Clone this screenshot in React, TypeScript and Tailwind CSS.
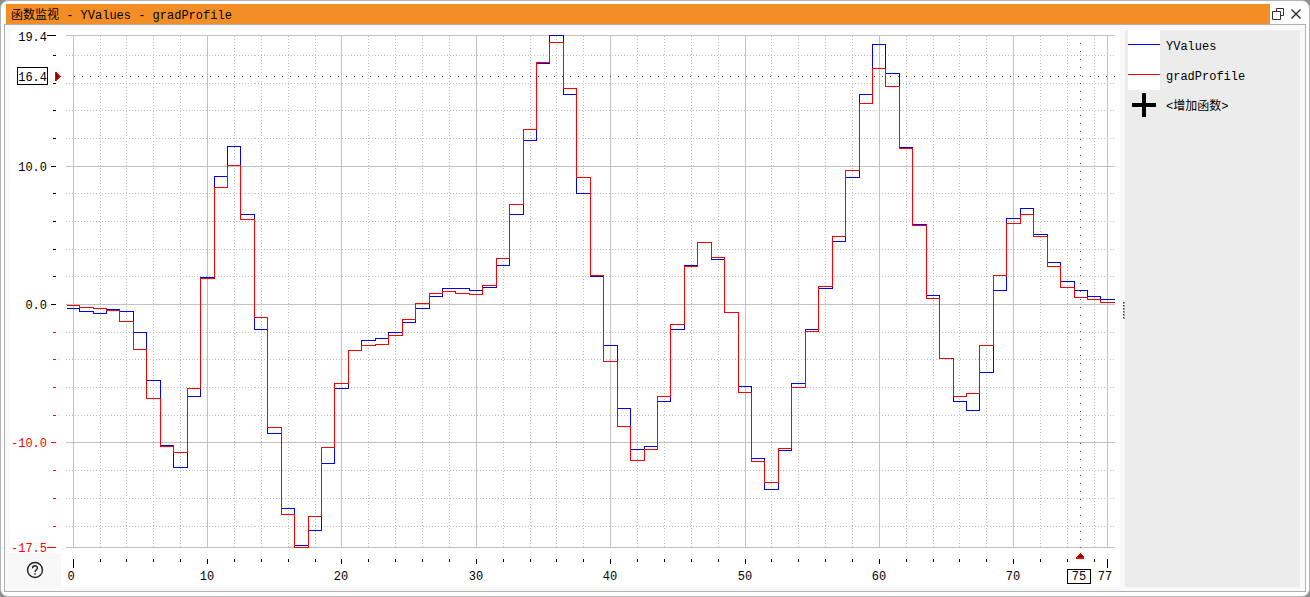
import { useState } from 'react';

type TSeries = {
   name: string;
   color: string;
   rows: number[];
};

// one canvas row per sample, index 0 - 77
const yValues = [
   308, 311, 313, 309, 311, 332, 380, 445, 467, 396, 277, 176, 146, 214, 329, 433, 508, 545, 530, 463, 388, 350, 340, 338, 332, 322, 308, 296, 288, 288,
   290, 287, 265, 214, 140, 63, 35, 94, 193, 276, 345, 408, 449, 446, 401, 329, 265, 242, 259, 312, 386, 458, 489, 450, 383, 329, 288, 241, 177, 94, 44, 73,
   147, 224, 295, 358, 401, 410, 372, 290, 218, 208, 234, 262, 281, 290, 296, 299,
];

const gradProfile = [
   305, 307, 308, 310, 321, 349, 398, 446, 452, 388, 278, 187, 165, 219, 317, 427, 514, 547, 516, 447, 383, 350, 345, 344, 335, 319, 303, 293, 291, 293,
   294, 285, 258, 204, 129, 62, 42, 88, 177, 275, 361, 426, 460, 449, 396, 324, 266, 242, 257, 312, 392, 461, 482, 448, 387, 331, 286, 236, 170, 103, 68, 86,
   148, 225, 298, 358, 396, 393, 345, 275, 223, 214, 236, 266, 287, 297, 299, 302,
];

const series: TSeries[] = [
   { name: 'YValues', color: '#0000ff', rows: yValues },
   { name: 'gradProfile', color: '#ff0000', rows: gradProfile },
];

const LEFT = 65;
const RIGHT = 1114;
const TOP = 35;
const BOTTOM = 547;

const gridX = (i: number) => Math.floor(73.15 + 13.437 * i);
const edgeX = (i: number) => Math.floor(72.95 + 13.437 * (i + 0.5));
const gridY = (value: number) => Math.floor(304.55 - 13.8425 * value);

const stepPath = (rows: number[]) => rows.map((y, i) => `${i === 0 ? `M66 ${y}` : `V${y}`}H${i === rows.length - 1 ? RIGHT : edgeX(i)}`).join('');

const xTicks = Array.from({ length: 39 }, (_, i) => i * 2);
const yTicks = Array.from({ length: 18 }, (_, i) => 18 - i * 2);

const yLabels = [
   { text: '19.4', base: 41 },
   { text: '10.0', base: 171 },
   { text: '0.0', base: 309 },
   { text: '-10.0', base: 447 },
   { text: '-17.5', base: 552 },
];

const Chart = () => (
   <svg viewBox="10 30 1110 557" preserveAspectRatio="xMinYMin meet" className="block h-full w-full bg-white font-['Liberation_Mono',monospace] text-xs">
      <rect x="10" y="553" width="51" height="34" fill="#f8f8f8" />

      <g transform="translate(.5 .5)" fill="none" stroke="#c0c0c0" shapeRendering="crispEdges">
         {xTicks.map((i) => (
            <path key={i} d={`M${gridX(i)} ${TOP}V${BOTTOM}`} strokeDasharray={i % 10 ? '1 2' : undefined} />
         ))}
         <path d={`M${gridX(77)} ${TOP}V${BOTTOM}`} />
         {yTicks.map((v) => (
            <path key={v} d={`M${LEFT} ${gridY(v)}H${RIGHT}`} strokeDasharray={v % 10 ? '1 2' : undefined} />
         ))}
         <path d={`M${LEFT} ${TOP}H${RIGHT}M${LEFT} ${BOTTOM}H${RIGHT}`} />

         {/* cursor */}
         <path d={`M73.5 76H${RIGHT}M1080 42.5V${BOTTOM}`} stroke="#555555" strokeDasharray="1 7" />

         {series.map((item) => (
            <path key={item.name} d={stepPath(item.rows)} stroke={item.color} />
         ))}
      </g>

      <g shapeRendering="crispEdges">
         {yTicks.map((v) => (
            <rect key={v} x={v % 10 ? 53 : 51} y={gridY(v)} width={v % 10 ? 3 : 5} height="1" fill={v < 0 ? '#ff0000' : '#000000'} />
         ))}
         <rect x="47" y={TOP} width="9" height="1" />
         <rect x="47" y={BOTTOM} width="9" height="1" fill="#ff0000" />
         {xTicks.slice(1).map((i) => (
            <rect key={i} x={gridX(i)} y="559" width="1" height={i % 10 ? 3 : 5} />
         ))}
         <rect x={gridX(0)} y="559" width="1" height="9" />
         <rect x={gridX(77)} y="559" width="1" height="9" />
      </g>

      {yLabels.map((item) => (
         <text key={item.text} x="47" y={item.base} textAnchor="end" fill={item.text.startsWith('-') ? '#ff0000' : '#000000'}>
            {item.text}
         </text>
      ))}
      <text x="71" y="580" textAnchor="middle">
         0
      </text>
      {[10, 20, 30, 40, 50, 60, 70].map((i) => (
         <text key={i} x={gridX(i)} y="580" textAnchor="middle">
            {i}
         </text>
      ))}
      <text x="1105" y="580" textAnchor="middle">
         77
      </text>

      <rect x="17.5" y="67.5" width="30" height="17" fill="#ffffff" stroke="#000000" />
      <text x="47" y="81" textAnchor="end">
         16.4
      </text>
      <g shapeRendering="crispEdges">
         <path d="M55 72H57V73H58V74H59V75H60V76H61V77H60V78H59V79H58V80H57V81H55Z" fill="#ee0000" />
         <path d="M56 74H57V75H58V76H59V77H58V78H57V79H56Z" fill="#800000" />
      </g>

      <rect x="1067.5" y="569.5" width="23" height="14" fill="#ffffff" stroke="#000000" />
      <text x="1079" y="580" textAnchor="middle">
         75
      </text>
      <g shapeRendering="crispEdges">
         <path d="M1076 559V557H1077V556H1078V555H1079V554H1080V553H1081V554H1082V555H1083V556H1084V559Z" fill="#ee0000" />
         <path d="M1078 557V556H1079V555H1082V556H1083V557Z" fill="#800000" />
      </g>

      <g fill="none" stroke="#222222" strokeWidth="1.4">
         <circle cx="35" cy="570" r="7.5" />
         <path d="M32.6 568.2C32.6 565 37.4 565 37.4 568.1C37.4 569.9 35 570 35 572M35 573.2V574.8" />
      </g>
   </svg>
);

const Legend = ({ onAdd }: { onAdd: () => void }) => (
   <aside className="w-[175px] shrink-0 bg-[#ececec] pl-[3px]">
      <ul>
         {series.map((item) => (
            <li key={item.name} className="flex h-[30px] items-center">
               <svg width="32" height="30" className="mr-1.5 bg-white" shapeRendering="crispEdges">
                  <rect y="14" width="32" height="1" fill={item.color} />
               </svg>
               <span className="pt-[3px]">{item.name}</span>
            </li>
         ))}
      </ul>
      <button type="button" onClick={onAdd} className="flex h-[30px] items-center">
         <svg width="32" height="30" className="mr-1.5" shapeRendering="crispEdges">
            <path d="M4 13H14V3H18V13H28V17H18V27H14V17H4Z" />
         </svg>
         <span className="pt-[3px]">&lt;增加函数&gt;</span>
      </button>
   </aside>
);

export default function App() {
   const [, setAdding] = useState(false);

   return (
      <div className="h-screen overflow-hidden bg-[#8c8c8c] font-['Liberation_Mono','Noto_Sans_CJK_SC',monospace] text-xs text-black">
         <div className="flex h-full flex-col rounded-lg border border-[#b4b4b4] bg-white px-[3px] pt-[3px] pb-1">
            <header className="flex h-5 shrink-0">
               <h1 className="ml-0.5 flex-1 bg-[#f38e26] pt-1 pl-[5px] leading-4 whitespace-nowrap">函数监视 - YValues - gradProfile</h1>
               <div className="flex w-9 items-center">
                  <button type="button" aria-label="Restore" className="ml-0.5">
                     <svg width="14" height="14" viewBox="0 0 14 14" fill="none" stroke="#333333">
                        <path d="M4.5 4.5V1.5H11.5V8.5H8.5M.5 4.5H8.5V12.5H.5Z" />
                     </svg>
                  </button>
                  <button type="button" aria-label="Close" className="ml-1">
                     <svg width="14" height="14" viewBox="0 0 14 14" fill="none" stroke="#222222" strokeWidth="1.3">
                        <path d="M1.5 2.5L10.5 11.5M10.5 2.5L1.5 11.5" />
                     </svg>
                  </button>
               </div>
            </header>

            <main className="flex min-h-0 flex-1 border border-[#b0b0b0] bg-[#f9f9f9] px-[5px] pt-[5px] pb-1">
               <div className="min-w-0 flex-1">
                  <Chart />
               </div>
               <div className="flex w-[5px] shrink-0 cursor-col-resize items-center justify-end pt-1">
                  <svg width="2" height="18" shapeRendering="crispEdges">
                     {[0, 3, 6, 9, 12, 15].map((y) => (
                        <g key={y}>
                           <rect y={y} width="2" height="2" fill="#a0a0a0" />
                           <rect y={y} width="1" height="1" fill="#404040" />
                        </g>
                     ))}
                  </svg>
               </div>
               <Legend onAdd={() => setAdding(true)} />
            </main>
         </div>
      </div>
   );
}
